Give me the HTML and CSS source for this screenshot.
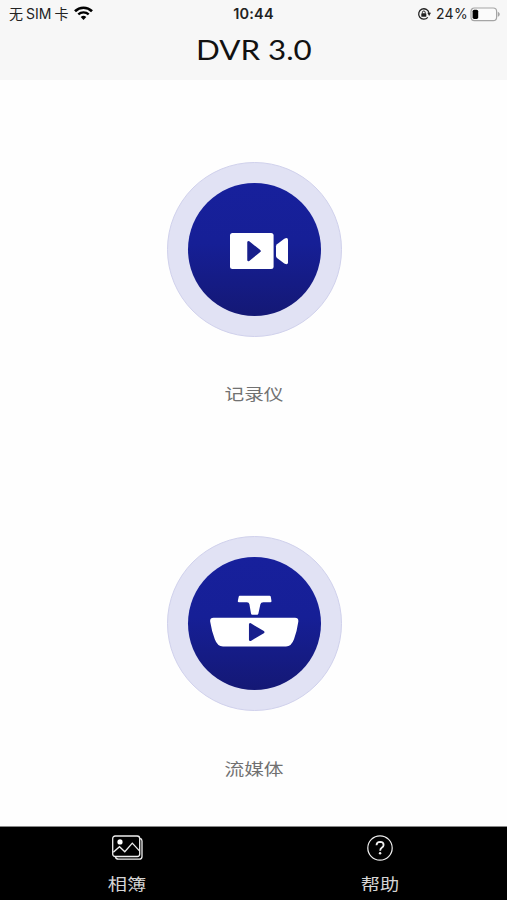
FILE: index.html
```
<!DOCTYPE html>
<html lang="zh-CN">
<head>
  <meta charset="UTF-8" />
  <meta name="viewport" content="width=device-width, initial-scale=1.0"/>
  <title>DVR 3.0</title>
  <link rel="stylesheet" href="styles.css">
</head>
<body>
  <header class="header">
    <div class="status">
      <div class="status-left">
        <span class="carrier">无<span class="sim">SIM</span>卡</span>
        <svg class="wifi" width="19" height="14" viewBox="0 0 19 14">
          <path d="M1 5.2a12.2 12.2 0 0 1 17 0" fill="none" stroke="#000" stroke-width="2.7"/>
          <path d="M4.3 8.4a7.5 7.5 0 0 1 10.4 0" fill="none" stroke="#000" stroke-width="2.3"/>
          <path d="M9.5 13.9L6.7 11a4 4 0 0 1 5.6 0z"/>
        </svg>
      </div>
      <span class="time">10:44</span>
      <div class="status-right">
        <svg class="lock" width="14" height="14" viewBox="0 0 14 14">
          <path d="M12 6A5.2 5.2 0 1 0 10.800 10.400" fill="none" stroke="#222" stroke-width="1.3"/>
          <path d="M10.300 5.800h3.700L12.100 9z" fill="#222"/>
          <rect x="4.300" y="6.300" width="5" height="3.5" rx=".6" fill="#222"/>
          <path d="M5.400 6.400V5.400a1.400 1.400 0 0 1 2.800 0v1" fill="none" stroke="#222"/>
        </svg>
        <span class="percent">24%</span>
        <svg class="battery" width="31" height="15" viewBox="0 0 31 15">
          <rect x="1" y="1" width="25.6" height="12.6" rx="3.4" fill="#fbfbfb" stroke="#a5a5a5" stroke-width="1.2"/>
          <rect x="2.6" y="2.7" width="5.6" height="9.2" rx="1.6"/>
          <path d="M27.8 4.8c2.6 1.2 2.6 3.9 0 5.1z" fill="#a5a5a5"/>
        </svg>
      </div>
    </div>
    <h1 class="title"><span class="title-text">DVR 3.0</span></h1>
  </header>

  <main class="main">
    <a class="device">
      <span class="ring">
        <svg class="disc" viewBox="0 0 133 133">
          <g transform="translate(-21.5 -21.2)" fill="#fff">
            <rect x="63.5" y="71.3" width="43.6" height="36" rx="2.5"/>
            <path d="M110.5 82.5l7.3-5.6q3.7-1.8 3.7 1.2v22.4q0 3-3.7 1.2l-7.3-5.6q-1-.8-1-2V84.5q0-1.2 1-2z"/>
            <path class="play" d="M82 80.5v17.6l11-8.8z"/>
          </g>
        </svg>
      </span>
      <span class="label">记录仪</span>
    </a>
    <a class="device stream">
      <span class="ring">
        <svg class="disc" viewBox="0 0 133 133">
          <g transform="translate(-22 -20.8)" fill="#fff">
            <path d="M73 59.5h30.6q1 0 1.2 1l.7 4.3q.1 1.3-1.2 1.3h-7q-2.400 0-2.900 2l-2 9.200q-.3 1.200-1.300 1.200h-4.800q-1.100 0-1.300-1.200l-1.600-9.200q-.4-2-2.400-2h-8q-1.400 0-1.200-1.300l.9-4.300q.2-1 .9-1z"/>
            <path d="M47.5 81.5h81.5q3.8 0 3.3 4-1.3 9.500-4.300 17.500-2.600 7.200-8 7.200H57q-5.600 0-8.200-7.200-3.100-8-4.600-17.500-.6-4 3.300-4z"/>
            <path class="play" d="M84.2 88.2v15.400l13-7.700z"/>
          </g>
        </svg>
      </span>
      <span class="label">流媒体</span>
    </a>
  </main>

  <nav class="tabbar">
    <a class="tab">
      <svg class="tab-icon" width="32" height="26" viewBox="0 0 32 26" fill="none" stroke="#eee" stroke-width="1.3">
        <rect x="1.7" y="1" width="27" height="20.5" rx="2.5"/>
        <path d="M29 3.5q2 .4 2 2.5v15.500q0 2.700-2.700 2.700H7.500q-2.500 0-3-2.200"/>
        <path d="M2.300 17.300l6.200-5.600 5.300 5 7.500-8.600 7.400 8"/>
        <circle cx="9" cy="6.900" r="2.600" fill="#fff" stroke="none"/>
      </svg>
      <span class="tab-label">相簿</span>
    </a>
    <a class="tab">
      <svg class="tab-icon" width="26" height="26" viewBox="0 0 26 26" fill="none" stroke="#eee">
        <circle cx="13" cy="13" r="12.2" stroke-width="1.2"/>
        <path d="M9.5 10.200q.2-3.300 3.700-3.300 3.400.1 3.400 3.100 0 1.600-1.900 2.800-1.500 1-1.500 3" stroke-width="1.8"/>
        <circle cx="13.1" cy="18.300" r="1.2" fill="#eee" stroke="none"/>
      </svg>
      <span class="tab-label">帮助</span>
    </a>
  </nav>
</body>
</html>
```
FILE: styles.css
```
* {
  box-sizing: border-box;
}
body {
  margin: 0;
  height: 900px;
  display: flex;
  flex-direction: column;
  background: #fefefe;
  font-family: Inter, "Noto Sans CJK SC", sans-serif;
  overflow: hidden;
}
.header {
  height: 80px;
  background: #f7f7f7;
}
.status {
  height: 28px;
  padding: 0 6px 0 9px;
  display: grid;
  grid-template-columns: 1fr auto 1fr;
  align-items: center;
  font-size: 14px;
  line-height: 28px;
  color: #222;
}
.status-left, .status-right {
  display: flex;
  align-items: center;
}
.status-right {
  justify-content: flex-end;
}
.carrier {
  width: 65px;
  white-space: nowrap;
}
.sim {
  margin: 0 3px;
}
.wifi {
  margin-top: -2px;
}
.time {
  margin-right: 3px;
  font-weight: 600;
  font-size: 14.5px;
  letter-spacing: 0.2px;
}
.percent {
  margin: 0 2px 0 5px;
  letter-spacing: 0.3px;
}
.title {
  margin: 5px 0 0;
  text-align: center;
  font-family: Lato, sans-serif;
  font-size: 27px;
  font-weight: 400;
  line-height: 34px;
  color: #111;
}
.title-text {
  display: inline-block;
  transform: scaleX(1.16);
}
.main {
  height: 746px;
  padding: 82px 0 0 2px;
}
.device {
  display: flex;
  flex-direction: column;
  align-items: center;
  height: 374px;
}
.ring {
  width: 175px;
  height: 175px;
  display: flex;
  align-items: center;
  justify-content: center;
  border: 1px solid #d0d1ec;
  border-radius: 50%;
  background: #e1e2f4;
}
.disc {
  width: 133px;
  height: 133px;
  border-radius: 50%;
  background: linear-gradient(#17209c, #161f96 45%, #141875);
}
.play {
  fill: #181f8c;
  stroke: #181f8c;
  stroke-width: 2.5;
  stroke-linejoin: round;
}
.label {
  margin-top: 44px;
  font-size: 16px;
  line-height: 26px;
  color: #717171;
  transform: scaleX(1.23);
}
.stream .ring, .stream .label {
  margin-left: -1px;
}
.stream .label {
  margin-top: 45px;
}
.tabbar {
  height: 74px;
  display: flex;
  border-top: 1px solid #888;
  background: #000;
}
.tab {
  flex: 1;
  padding-top: 8px;
  display: flex;
  flex-direction: column;
  align-items: center;
}
.tab-label {
  margin-top: 10px;
  font-size: 16px;
  line-height: 26px;
  color: #d4d4d4;
  transform: scaleX(1.2);
}
```
